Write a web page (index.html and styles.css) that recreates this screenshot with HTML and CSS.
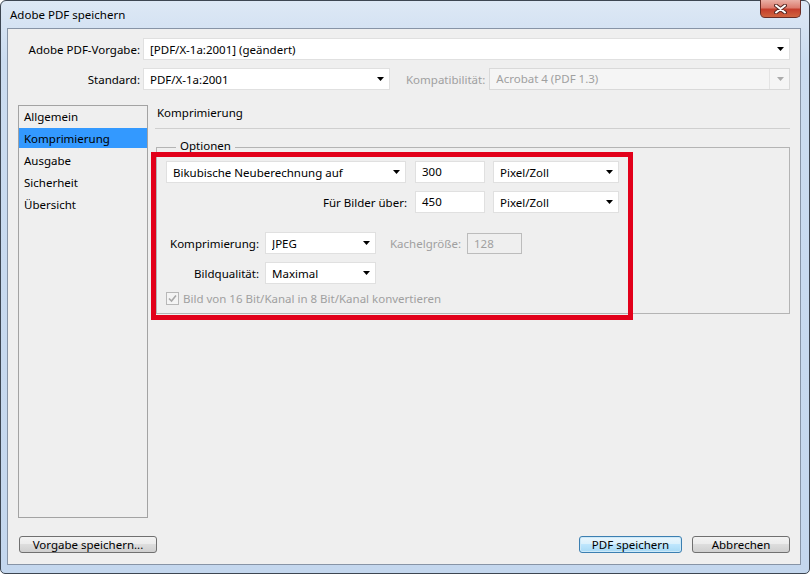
FILE: index.html
```html
<!DOCTYPE html>
<html lang="de">
<head>
  <meta charset="UTF-8">
  <title>Adobe PDF speichern</title>
  <link rel="stylesheet" href="styles.css">
</head>
<body>

<div class="window">
  <div class="titlebar">
    <span class="title">Adobe PDF speichern</span>
    <div class="close">
      <svg width="13" height="10" viewBox="0 0 13 10">
        <path d="M2 1.5 L11 8.5 M11 1.5 L2 8.5" stroke="#5a2a24" stroke-width="4" stroke-linecap="round"/>
        <path d="M2 1.5 L11 8.5 M11 1.5 L2 8.5" stroke="#ffffff" stroke-width="2" stroke-linecap="round"/>
      </svg>
    </div>
  </div>

  <div class="client">
    <div class="row">
      <span class="lbl lbl-main">Adobe PDF-Vorgabe:</span>
      <div class="combo combo-fill"><span class="val">[PDF/X-1a:2001] (geändert)</span><i class="arrow"></i></div>
    </div>

    <div class="row row-std">
      <span class="lbl lbl-main">Standard:</span>
      <div class="combo combo-std"><span class="val">PDF/X-1a:2001</span><i class="arrow"></i></div>
      <span class="lbl lbl-off lbl-compat">Kompatibilität:</span>
      <div class="combo combo-fill combo-off"><span class="val">Acrobat 4 (PDF 1.3)</span><i class="arrow"></i></div>
    </div>

    <div class="main">
      <ul class="nav">
        <li>Allgemein</li>
        <li class="active">Komprimierung</li>
        <li>Ausgabe</li>
        <li>Sicherheit</li>
        <li>Übersicht</li>
      </ul>

      <div class="panel">
        <div class="panel-title">Komprimierung</div>
        <div class="sep"></div>

        <div class="group">
          <span class="legend">Optionen</span>

          <div class="grow">
            <div class="combo combo-method"><span class="val">Bikubische Neuberechnung auf</span><i class="arrow"></i></div>
            <div class="field field-res">300</div>
            <div class="combo combo-unit"><span class="val">Pixel/Zoll</span><i class="arrow"></i></div>
          </div>

          <div class="grow grow-b">
            <span class="lbl lbl-above">Für Bilder über:</span>
            <div class="field">450</div>
            <div class="combo combo-unit"><span class="val">Pixel/Zoll</span><i class="arrow"></i></div>
          </div>

          <div class="grow grow-c">
            <span class="lbl lbl-short">Komprimierung:</span>
            <div class="combo combo-small"><span class="val">JPEG</span><i class="arrow"></i></div>
            <span class="lbl lbl-off lbl-tile">Kachelgröße:</span>
            <div class="field field-off">128</div>
          </div>

          <div class="grow grow-d">
            <span class="lbl lbl-short">Bildqualität:</span>
            <div class="combo combo-small"><span class="val">Maximal</span><i class="arrow"></i></div>
          </div>

          <div class="grow grow-e">
            <span class="check">
              <svg width="13" height="13" viewBox="0 0 13 13">
                <rect x="0.5" y="0.5" width="12" height="12" fill="#f4f4f4" stroke="#b8b8b8"/>
                <path d="M3 6.5 L5.5 9 L10 3.5" fill="none" stroke="#a8a8a8" stroke-width="1.6"/>
              </svg>
            </span>
            <span class="lbl-off check-text">Bild von 16 Bit/Kanal in 8 Bit/Kanal konvertieren</span>
          </div>

          <div class="marker"></div>
        </div>
      </div>
    </div>

    <div class="buttons">
      <button class="btn btn-preset">Vorgabe speichern...</button>
      <div class="spacer"></div>
      <button class="btn btn-default">PDF speichern</button>
      <button class="btn btn-cancel">Abbrechen</button>
    </div>
  </div>
</div>

</body>
</html>
```

FILE: styles.css
```css
body {
  margin: 0;
  background: #ffffff;
  font-family: "Noto Sans", "Open Sans", sans-serif;
  font-size: 11.5px;
  color: #000;
}

/* Fensterrahmen */
.window {
  width: 810px;
  height: 574px;
  box-sizing: border-box;
  border: 1px solid #3d4652;
  border-radius: 6px 6px 5px 5px;
  background: linear-gradient(#dde8f5, #cbdcf0 60px, #c4d7ee);
  padding: 0 8px 8px 6px;
  display: flex;
  flex-direction: column;
}

.titlebar {
  height: 27px;
  display: flex;
  align-items: flex-start;
  justify-content: space-between;
}

.title {
  padding-left: 3px;
  line-height: 27px;
}

.close {
  width: 41px;
  height: 18px;
  margin-top: -1px;
  box-sizing: border-box;
  border: 1px solid #6a2c25;
  border-top: 0;
  border-radius: 0 0 5px 5px;
  background: linear-gradient(#eab0a6, #dc7d6f 45%, #c53e2c 55%, #d0643f);
  display: flex;
  align-items: center;
  justify-content: center;
}

.client {
  flex: 1;
  border: 1px solid #8794a6;
  background: #efefef;
  padding: 9px 10px 11px 10px;
  display: flex;
  flex-direction: column;
}

/* Zeilen oben */
.row {
  display: flex;
  align-items: center;
  height: 22px;
}

.row-std {
  margin-top: 8px;
}

.lbl {
  white-space: nowrap;
}

.lbl-main {
  width: 122px;
  margin-right: 3px;
  text-align: right;
}

.lbl-off {
  color: #a0a0a0;
}

.lbl-compat {
  margin-left: 16px;
  margin-right: 4px;
}

.combo {
  height: 22px;
  box-sizing: border-box;
  border: 1px solid #e0e0e0;
  background: #fff;
  display: flex;
  align-items: center;
  padding: 0 5px 0 6px;
}

.combo .val {
  flex: 1;
  white-space: nowrap;
  overflow: hidden;
}

.arrow {
  width: 7px;
  height: 4px;
  background: #000;
  clip-path: polygon(0 0, 100% 0, 50% 100%);
}

.combo-fill {
  flex: 1;
}

.combo-std {
  width: 247px;
}

.combo-off {
  background: #f5f5f5;
  border-color: #d9d9d9;
  color: #a0a0a0;
}

.combo-off .arrow {
  background: #ababab;
  margin-left: 7px;
}

.combo-off .val {
  border-right: 1px solid #e4e4e4;
  height: 20px;
  line-height: 20px;
}

/* Hauptbereich */
.main {
  margin-top: 15px;
  height: 413px;
  display: flex;
}

.nav {
  width: 130px;
  box-sizing: border-box;
  border: 1px solid #a3a3a3;
  margin: 0;
  padding: 0;
  list-style: none;
}

.nav li {
  height: 20px;
  line-height: 21px;
  padding-left: 5px;
  margin-bottom: 2px;
}

.nav li.active {
  background: #3399ff;
}

.panel {
  flex: 1;
  margin-left: 7px;
}

.panel-title {
  line-height: 16px;
  padding-left: 2px;
}

.sep {
  margin-top: 7px;
  height: 1px;
  background: #cfcfcf;
}

.group {
  position: relative;
  margin-top: 18px;
  margin-left: 1px;
  height: 167px;
  box-sizing: border-box;
  border: 1px solid #b4b4b4;
  padding: 13px 0 0 9px;
}

.legend {
  position: absolute;
  top: -10px;
  left: 19px;
  padding: 0 4px;
  line-height: 16px;
  background: #efefef;
}

.grow {
  display: flex;
  align-items: center;
  height: 22px;
}

.grow-b,
.grow-d {
  margin-top: 8px;
}

.grow-c {
  margin-top: 19px;
}

.grow-e {
  margin-top: 8px;
  height: 13px;
}

.combo-method {
  width: 240px;
}

.combo-unit {
  width: 126px;
  margin-left: 8px;
}

.combo-small {
  width: 111px;
}

.field {
  width: 70px;
  height: 22px;
  box-sizing: border-box;
  border: 1px solid #e0e0e0;
  background: #fff;
  padding-left: 6px;
  line-height: 20px;
}

.field-res {
  margin-left: 9px;
}

.field-off {
  width: 55px;
  height: 21px;
  background: #efefef;
  border-color: #bcbcbc;
  color: #a0a0a0;
  line-height: 19px;
}

.lbl-above {
  width: 241px;
  margin-right: 8px;
  text-align: right;
}

.lbl-short {
  width: 93px;
  margin-right: 6px;
  text-align: right;
}

.lbl-tile {
  margin-left: 14px;
  margin-right: 6px;
}

.check {
  width: 13px;
  height: 13px;
  display: flex;
}

.check-text {
  margin-left: 4px;
  white-space: nowrap;
}

/* rote Markierung */
.marker {
  position: absolute;
  left: -6px;
  top: 4px;
  width: 482px;
  height: 168px;
  box-sizing: border-box;
  border: 5px solid #e2001a;
}

/* Schaltflächen */
.buttons {
  margin-top: 18px;
  height: 17px;
  display: flex;
}

.spacer {
  flex: 1;
}

.btn {
  height: 17px;
  padding: 0;
  box-sizing: border-box;
  border: 1px solid #707070;
  border-radius: 3px;
  background: linear-gradient(#f3f3f3, #ebebeb 50%, #dddddd 50%, #cfcfcf);
  font-family: inherit;
  font-size: 11.5px;
  line-height: 15px;
  color: #000;
}

.btn-preset {
  width: 138px;
  margin-left: 1px;
}

.btn-default {
  width: 103px;
  border-color: #3c7fb1;
  background: linear-gradient(#eaf6fd, #d9f0fc 50%, #bee6fd 50%, #a7d9f5);
  box-shadow: inset 0 0 0 1px #cde9f8;
}

.btn-cancel {
  width: 98px;
  margin-left: 10px;
}
```
